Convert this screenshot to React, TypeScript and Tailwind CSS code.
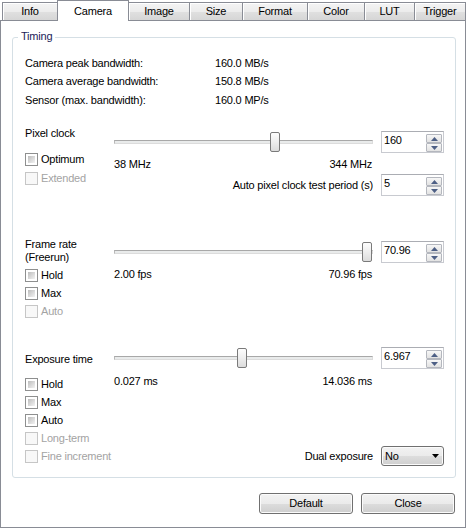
import React from "react";

const tabBase =
  "flex h-[18px] items-center justify-center border-t border-[#898c95] bg-[linear-gradient(to_bottom,#f4f4f4,#ececec_50%,#e0e0e0_51%,#d6d6d6)] shadow-[inset_1px_1px_0_#ffffff]";

function Check({ label, disabled }: { label: string; disabled?: boolean }) {
  return (
    <div className="flex h-[18px] items-center gap-[3px] whitespace-nowrap">
      {disabled ? (
        <div className="h-[13px] w-[13px] border border-[#c6c6c6] bg-[#f8f8f8]" />
      ) : (
        <div className="h-[13px] w-[13px] border border-[#8e8f8f] bg-white p-[2px]">
          <div className="h-full w-full bg-gradient-to-br from-[#bdbdbd] to-[#f3f3f3]" />
        </div>
      )}
      <span className={disabled ? "text-[#a3a3a3]" : "text-black"}>{label}</span>
    </div>
  );
}

function Slider({ pos }: { pos: number }) {
  return (
    <div className="relative h-[22px] w-[259px] shrink-0">
      <div className="absolute left-0 right-0 top-[9px] h-[4px] border border-[#dcdcdc] border-t-[#a8a8a8] border-l-[#b8b8b8] bg-[#e9ebeb]" />
      <div
        className="absolute top-[1px] h-[20px] w-[10px] rounded-[2px] border border-[#7a7a7a] bg-[linear-gradient(to_bottom,#fdfdfd,#eeeeee_50%,#dcdcdc)]"
        style={{ left: pos }}
      />
    </div>
  );
}

function Arrow({ up }: { up?: boolean }) {
  return (
    <svg width="7" height="4" viewBox="0 0 7 4">
      <polygon points={up ? "0,4 3.5,0 7,4" : "0,0 7,0 3.5,4"} fill="#4d5f85" />
    </svg>
  );
}

function Spin({ value }: { value: string }) {
  return (
    <div className="flex h-[22px] w-[63px] shrink-0 border border-[#c8cad0] border-t-[#abadb3] bg-white">
      <div className="flex-1 pl-[2px] pt-[2px]">{value}</div>
      <div className="mr-[1px] mt-[2px] flex h-[18px] w-[16px] flex-col">
        <div className="flex h-[9px] items-center justify-center rounded-[1px] border border-[#b4b7be] bg-[linear-gradient(to_bottom,#f7f7f7,#e2e2e2)]">
          <Arrow up />
        </div>
        <div className="flex h-[9px] items-center justify-center rounded-[1px] border border-[#b4b7be] bg-[linear-gradient(to_bottom,#f7f7f7,#e2e2e2)]">
          <Arrow />
        </div>
      </div>
    </div>
  );
}

function Button({ label }: { label: string }) {
  return (
    <div className="flex h-[21px] w-[94px] items-center justify-center rounded-[3px] border border-[#707070] bg-[linear-gradient(to_bottom,#f2f2f2_0%,#ebebeb_50%,#dddddd_51%,#cfcfcf_100%)] shadow-[inset_0_0_0_1px_#fbfbfb]">
      {label}
    </div>
  );
}

export default function App() {
  return (
    <div className="h-[530px] w-[468px] bg-white font-['Liberation_Sans',Arial,sans-serif] text-[11px] leading-[13px] tracking-[-0.2px] text-black">
      {/* tab strip */}
      <div className="relative z-10 flex h-[20px] items-end pl-[2px]">
        <div className={tabBase + " w-[55px] border-l"}>Info</div>
        <div className="relative z-10 mb-[-1px] flex h-[21px] w-[72px] items-center justify-center border-x border-t border-[#898c95] bg-white">
          Camera
        </div>
        <div className={tabBase + " w-[61px] border-r"}>Image</div>
        <div className={tabBase + " w-[53px] border-r"}>Size</div>
        <div className={tabBase + " w-[65px] border-r"}>Format</div>
        <div className={tabBase + " w-[57px] border-r"}>Color</div>
        <div className={tabBase + " w-[50px] border-r"}>LUT</div>
        <div className={tabBase + " w-[51px] border-r"}>Trigger</div>
      </div>

      {/* panel */}
      <div className="flex h-[508px] w-[466px] flex-col border border-[#898c95] bg-white">
        <div className="relative ml-[11px] mt-[16px] h-[441px] w-[444px] rounded-[3px] border border-[#d5dfe5] pl-[12px] pt-[16px]">
          <span className="absolute left-[5px] top-[-8px] bg-white px-[3px] text-[#1c2258]">Timing</span>

          {/* info rows */}
          <div className="grid grid-cols-[190px_auto]">
            <div className="flex h-[18px] items-center">Camera peak bandwidth:</div>
            <div className="flex h-[18px] items-center">160.0 MB/s</div>
            <div className="flex h-[19px] items-center">Camera average bandwidth:</div>
            <div className="flex h-[19px] items-center">150.8 MB/s</div>
            <div className="flex h-[19px] items-center">Sensor (max. bandwidth):</div>
            <div className="flex h-[19px] items-center">160.0 MP/s</div>
          </div>

          {/* pixel clock */}
          <div className="mt-[14px] flex">
            <div className="w-[89px] shrink-0">
              <div className="flex h-[18px] items-center">Pixel clock</div>
              <div className="mt-[8px]">
                <Check label="Optimum" />
              </div>
              <div className="mt-[1px]">
                <Check label="Extended" disabled />
              </div>
            </div>
            <div className="w-[330px]">
              <div className="mt-[7px] flex items-center gap-[8px]">
                <Slider pos={156} />
                <Spin value="160" />
              </div>
              <div className="mt-[2px] flex h-[18px] w-[259px] items-center justify-between pr-[1px]">
                <span>38 MHz</span>
                <span>344 MHz</span>
              </div>
              <div className="mt-[1px] flex h-[22px] items-center justify-end gap-[8px]">
                <span className="whitespace-nowrap">Auto pixel clock test period (s)</span>
                <Spin value="5" />
              </div>
            </div>
          </div>

          {/* frame rate */}
          <div className="mt-[42px] flex">
            <div className="w-[89px] shrink-0">
              <div>
                Frame rate
                <br />
                (Freerun)
              </div>
              <div className="mt-[2px]">
                <Check label="Hold" />
                <Check label="Max" />
                <Check label="Auto" disabled />
              </div>
            </div>
            <div className="w-[330px]">
              <div className="mt-[3px] flex items-center gap-[8px]">
                <Slider pos={248} />
                <Spin value="70.96" />
              </div>
              <div className="mt-[2px] flex h-[18px] w-[259px] items-center justify-between pr-[1px]">
                <span>2.00 fps</span>
                <span>70.96 fps</span>
              </div>
            </div>
          </div>

          {/* exposure */}
          <div className="mt-[27px] flex">
            <div className="w-[89px] shrink-0">
              <div className="mt-[3px] flex h-[18px] items-center whitespace-nowrap">Exposure time</div>
              <div className="mt-[7px]">
                <Check label="Hold" />
                <Check label="Max" />
                <Check label="Auto" />
                <Check label="Long-term" disabled />
                <Check label="Fine increment" disabled />
              </div>
            </div>
            <div className="w-[330px]">
              <div className="flex items-center gap-[8px]">
                <Slider pos={123} />
                <Spin value="6.967" />
              </div>
              <div className="mt-[3px] flex h-[18px] w-[259px] items-center justify-between pr-[1px]">
                <span>0.027 ms</span>
                <span>14.036 ms</span>
              </div>
              <div className="mt-[56px] flex h-[20px] items-center justify-end gap-[8px]">
                <span className="whitespace-nowrap">Dual exposure</span>
                <div className="flex h-[20px] w-[63px] shrink-0 items-center justify-between rounded-[3px] border border-[#707070] bg-[linear-gradient(to_bottom,#f2f2f2_0%,#ebebeb_50%,#dddddd_51%,#cfcfcf_100%)] pl-[3px] pr-[4px] shadow-[inset_0_0_0_1px_#fbfbfb]">
                  <span>No</span>
                  <svg width="7" height="4" viewBox="0 0 7 4">
                    <polygon points="0,0 7,0 3.5,4" fill="#000000" />
                  </svg>
                </div>
              </div>
            </div>
          </div>
        </div>

        {/* buttons */}
        <div className="mt-[15px] flex justify-end gap-[8px] pr-[10px]">
          <Button label="Default" />
          <Button label="Close" />
        </div>
      </div>
    </div>
  );
}
